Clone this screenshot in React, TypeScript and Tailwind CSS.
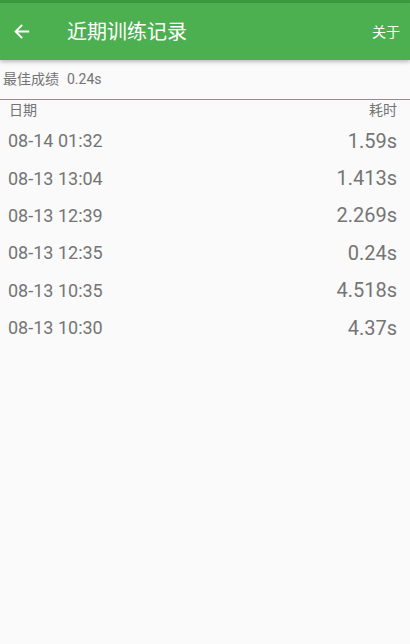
import React from "react";

const rows = [
  ["08-14 01:32", "1.59s"],
  ["08-13 13:04", "1.413s"],
  ["08-13 12:39", "2.269s"],
  ["08-13 12:35", "0.24s"],
  ["08-13 10:35", "4.518s"],
  ["08-13 10:30", "4.37s"],
];

export default function App() {
  return (
    <div
      className="w-[410px] h-[644px] bg-[#fafafa] flex flex-col overflow-hidden"
      style={{ fontFamily: 'Roboto, "Noto Sans CJK SC", sans-serif' }}
    >
      <div className="h-[3px] bg-[#3b9a3f]" />
      <div className="relative z-10 h-[57px] bg-[#4caf50] flex items-center shadow-[0_2px_4px_rgba(0,0,0,0.25)]">
        <div className="w-[44px] pl-[12px] flex items-center">
          <svg width="19" height="19" viewBox="0 0 24 24" fill="none">
            <path d="M20.5 12H5M12 4.5L4.5 12l7.5 7.5" stroke="#fff" strokeWidth="2.4" strokeLinecap="square" />
          </svg>
        </div>
        <div className="ml-[23px] text-white text-[20px] leading-none">近期训练记录</div>
        <div className="ml-auto mr-[10px] text-white text-[14px] leading-none">关于</div>
      </div>
      <div className="h-[39px] flex items-center pl-[3px] text-[14px] text-[#737373]">
        <span>最佳成绩</span>
        <span className="ml-[8px]">0.24s</span>
      </div>
      <div className="h-[1px] bg-[#7b97a5]" />
      <div className="h-[21px] flex items-center justify-between pl-[9px] pr-[13px] text-[14px] text-[#737373]">
        <span>日期</span>
        <span>耗时</span>
      </div>
      <div className="flex flex-col pt-[1px]">
        {rows.map(([d, t]) => (
          <div key={d} className="h-[37.4px] flex items-center justify-between pl-[8px] pr-[13px] text-[#757575]">
            <span className="text-[18px]">{d}</span>
            <span className="text-[20px]">{t}</span>
          </div>
        ))}
      </div>
    </div>
  );
}
